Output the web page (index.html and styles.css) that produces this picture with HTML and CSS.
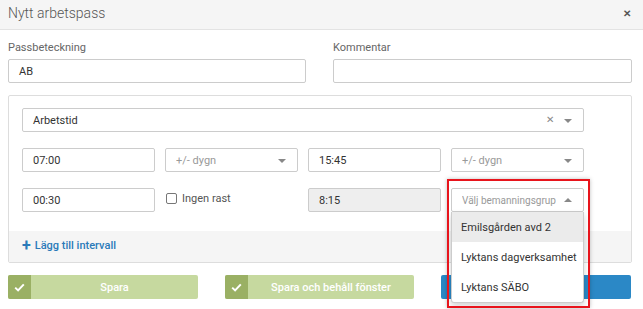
FILE: index.html
```html
<!DOCTYPE html>
<html lang="sv">
<head>
<meta charset="utf-8">
<title>Nytt arbetspass</title>
<link rel="stylesheet" href="styles.css">
</head>
<body>
<div class="modal">
  <div class="modal-header">
    <span class="modal-title">Nytt arbetspass</span>
    <span class="close">&#x2715;</span>
  </div>
  <div class="modal-body">
    <div class="fields">
      <div class="field">
        <label class="label">Passbeteckning</label>
        <div class="input">AB</div>
      </div>
      <div class="field">
        <label class="label">Kommentar</label>
        <div class="input"></div>
      </div>
    </div>
    <div class="panel">
      <div class="panel-body">
        <div class="select wide">
          <span class="value">Arbetstid</span>
          <span class="clear">&#x2715;</span>
          <span class="caret"></span>
        </div>
        <div class="row">
          <div class="input">07:00</div>
          <div class="select"><span class="placeholder">+/- dygn</span><span class="caret"></span></div>
          <div class="input">15:45</div>
          <div class="select"><span class="placeholder">+/- dygn</span><span class="caret"></span></div>
        </div>
        <div class="row">
          <div class="input">00:30</div>
          <label class="check"><span class="box"></span>Ingen rast</label>
          <div class="input disabled">8:15</div>
          <div class="dd-wrap">
            <div class="select open"><span class="placeholder narrow">Välj bemanningsgrup</span><span class="caret up"></span></div>
            <ul class="menu">
              <li class="item active">Emilsgården avd 2</li>
              <li class="item">Lyktans dagverksamhet</li>
              <li class="item">Lyktans SÄBO</li>
            </ul>
            <div class="highlight"></div>
          </div>
        </div>
      </div>
      <div class="panel-footer">
        <span class="add"><span class="plus">+</span>Lägg till intervall</span>
      </div>
    </div>
    <div class="buttons">
      <button class="btn green"><span class="icon"><svg width="11" height="9" viewBox="0 0 11 9"><path d="M1.2 4.6 L4.1 7.4 L9.8 1.4" fill="none" stroke="#fff" stroke-width="2"/></svg></span><span class="btn-text">Spara</span></button>
      <button class="btn green"><span class="icon"><svg width="11" height="9" viewBox="0 0 11 9"><path d="M1.2 4.6 L4.1 7.4 L9.8 1.4" fill="none" stroke="#fff" stroke-width="2"/></svg></span><span class="btn-text">Spara och behåll fönster</span></button>
      <button class="btn blue"><span class="btn-text">Avbryt</span></button>
    </div>
  </div>
</div>
</body>
</html>
```
FILE: styles.css
```css
* { box-sizing: border-box; }
html, body { margin: 0; padding: 0; background: #fff; }
body {
  font-family: Roboto, "Liberation Sans", Arial, sans-serif;
  font-size: 11px;
  color: #333;
  width: 643px;
  height: 309px;
  overflow: hidden;
}
.modal { width: 643px; }
.modal-header {
  height: 30px;
  background: #f5f5f5;
  border-bottom: 1px solid #e3e3e3;
  display: flex;
  align-items: center;
  justify-content: space-between;
  padding: 0 12px 3px 8px;
}
.modal-title {
  font-size: 14px;
  font-weight: 300;
  color: #555;
}
.close {
  font-size: 10px;
  font-weight: bold;
  color: #555;
}
.modal-body { padding: 11px 11px 0 8px; }
.fields {
  display: grid;
  grid-template-columns: 298px 299px;
  column-gap: 27px;
}
.label {
  display: block;
  color: #666;
  font-size: 11px;
  line-height: 13px;
  height: 18px;
}
.input, .select {
  height: 24px;
  border: 1px solid #ccc;
  border-radius: 2px;
  background: #fff;
  display: flex;
  align-items: center;
  padding: 0 10px;
  font-size: 11px;
  color: #333;
}
.input.disabled { background: #eee; }
.panel {
  margin-top: 12px;
  border: 1px solid #ddd;
  border-radius: 2px;
  width: 624px;
}
.panel-body {
  padding: 12px 47px 19px 13px;
  display: flex;
  flex-direction: column;
  gap: 16px;
}
.select { position: relative; padding-right: 26px; }
.select.open { padding-right: 20px; }
.select .caret {
  position: absolute;
  right: 11px;
  top: 10px;
  width: 0; height: 0;
  border-left: 4px solid transparent;
  border-right: 4px solid transparent;
  border-top: 4px solid #888;
}
.select .caret.up {
  border-top: none;
  border-bottom: 4px solid #888;
  top: 9px;
}
.select .clear {
  position: absolute;
  right: 29px;
  top: 5px;
  font-size: 10px;
  color: #888;
}
.placeholder { color: #999; white-space: nowrap; overflow: hidden; }
.placeholder.narrow { font-size: 10px; }
.row {
  display: grid;
  grid-template-columns: repeat(4, 133px);
  column-gap: 10px;
}
.check {
  display: flex;
  align-items: flex-start;
  gap: 5px;
  color: #555;
  padding-top: 4px;
  padding-left: 1px;
}
.box {
  width: 11px; height: 11px;
  border: 1px solid #777;
  border-radius: 2px;
  margin-top: 1px;
}
.dd-wrap { position: relative; }
.menu {
  position: absolute;
  left: 0; top: 24px;
  width: 133px;
  margin: 0; padding: 0;
  list-style: none;
  background: #fff;
  border: 1px solid #ccc;
  border-top: none;
  border-radius: 0 0 3px 3px;
  box-shadow: 0 3px 6px rgba(0,0,0,0.18);
  z-index: 2;
}
.item {
  height: 30px;
  display: flex;
  align-items: center;
  padding: 0 9px;
  color: #333;
  white-space: nowrap;
}
.item.active { background: #ebebeb; }
.highlight {
  position: absolute;
  left: -4px; top: -9px;
  width: 143px; height: 129px;
  border: 2px solid #e8141c;
  box-shadow: 0 0 4px rgba(0,0,0,0.25);
  z-index: 3;
  pointer-events: none;
}
.panel-footer {
  background: #f5f5f5;
  height: 31px;
  display: flex;
  align-items: center;
  padding: 0 13px 2px;
}
.add {
  color: #2a7ab9;
  font-weight: 500;
  font-size: 11px;
  display: flex;
  align-items: center;
}
.plus {
  font-size: 16px;
  font-weight: bold;
  margin-right: 4px;
  line-height: 10px;
}
.buttons {
  margin-top: 12px;
  display: grid;
  grid-template-columns: 190px 189px 190px;
  column-gap: 27px;
}
.btn {
  height: 24px;
  border: none;
  border-radius: 2px;
  padding: 0;
  display: flex;
  align-items: center;
  font-family: inherit;
  font-size: 11px;
  font-weight: 500;
  color: #fff;
}
.btn.green { background: #c6d99f; }
.btn.blue { background: #2b88c6; justify-content: center; }
.icon {
  width: 23px; height: 24px;
  background: #9ab064;
  border-radius: 2px 0 0 2px;
  display: flex;
  align-items: center;
  justify-content: center;
}
.btn-text { flex: 1; text-align: center; }
.btn.blue .btn-text { flex: 0 0 auto; }
```
